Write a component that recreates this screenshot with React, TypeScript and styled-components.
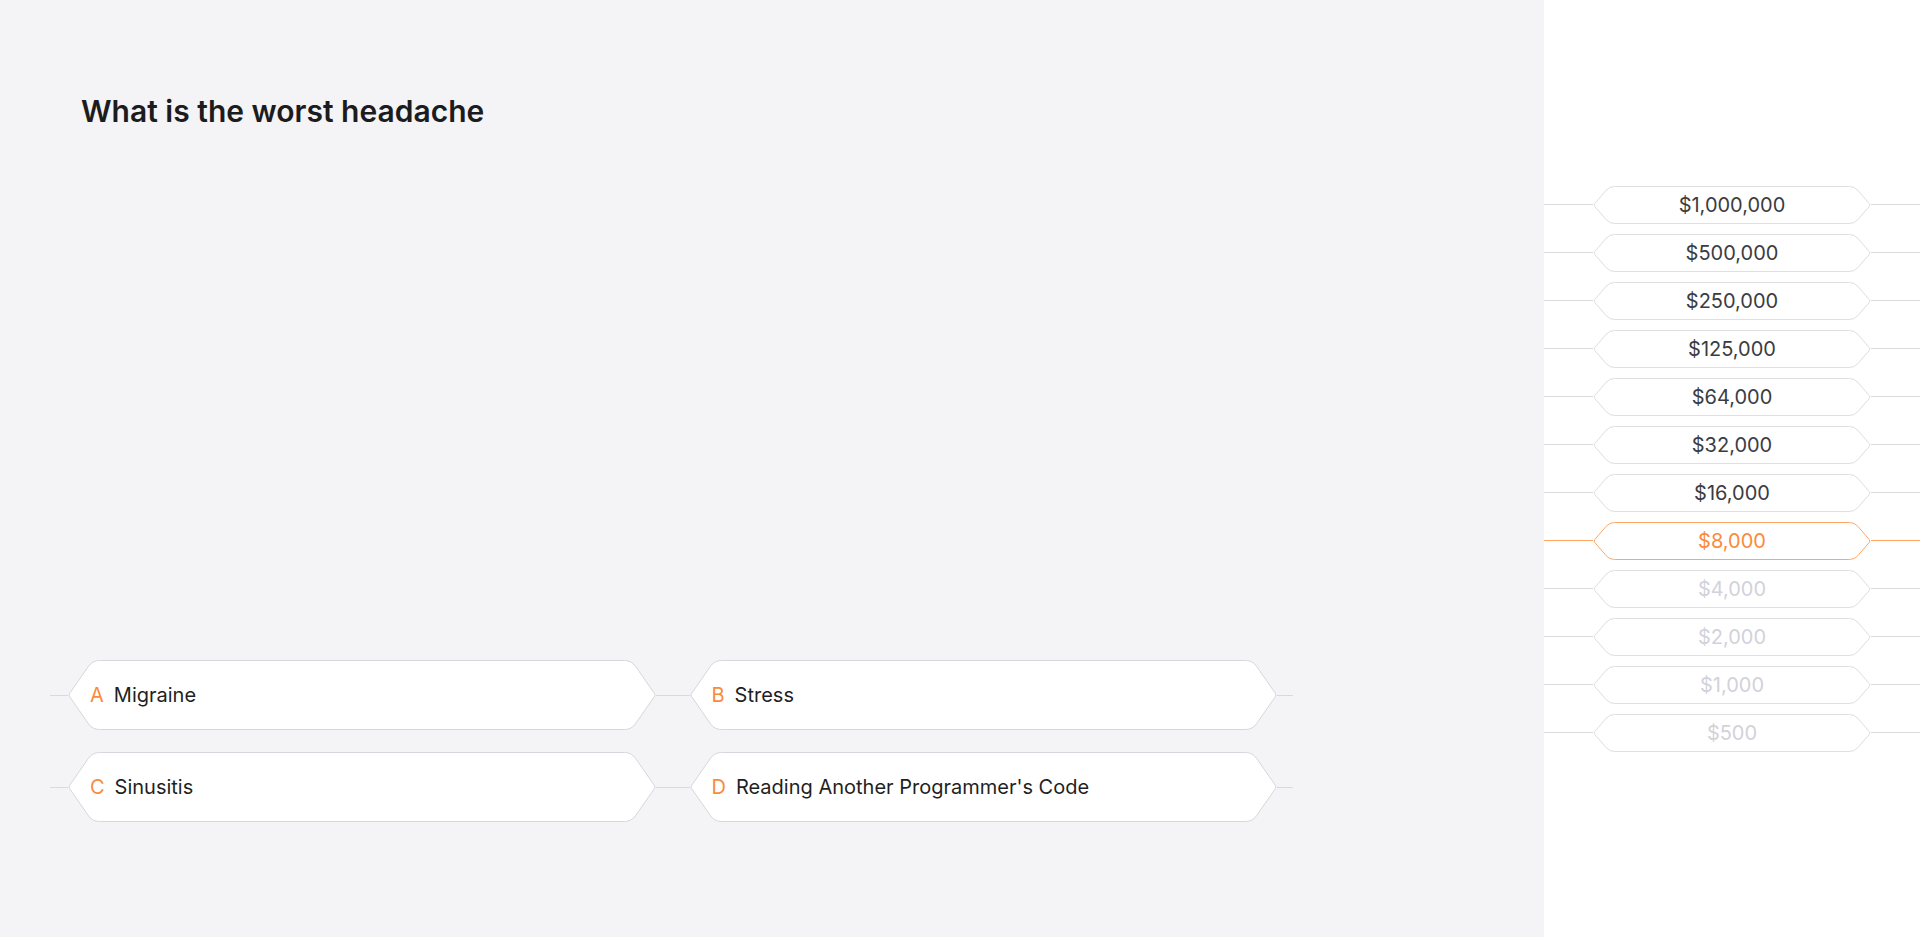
import React from "react";
import styled, { createGlobalStyle } from "styled-components";

const GlobalStyle = createGlobalStyle`
  html, body { margin: 0; padding: 0; }
  body { font-family: Inter, "Noto Sans", Arial, sans-serif; background: #ffffff; }
  * { box-sizing: border-box; }
`;

const ORANGE = "#fa8b3b";
const ORANGE_LINE = "#ffa866";
const GRAY_BORDER = "#d6d6dc";
const GRAY_LINE = "#d9d9de";

function capPath(w: number, h: number, b: number, r: number, rt: number) {
  const y0 = 0.5;
  const y1 = h - 0.5;
  const ym = h / 2;
  const cx = b + 0.5;
  const tx = 0.5;
  const dx = tx - cx;
  const dy = ym - y0;
  const L = Math.sqrt(dx * dx + dy * dy);
  const ux = dx / L;
  const uy = dy / L;
  const f = (n: number) => n.toFixed(2);
  return [
    `M ${f(w)} ${f(y0)}`,
    `L ${f(cx + r)} ${f(y0)}`,
    `Q ${f(cx)} ${f(y0)} ${f(cx + ux * r)} ${f(y0 + uy * r)}`,
    `L ${f(tx - ux * rt)} ${f(ym - uy * rt)}`,
    `Q ${f(tx)} ${f(ym)} ${f(tx - ux * rt)} ${f(ym + uy * rt)}`,
    `L ${f(cx + ux * r)} ${f(y1 - uy * r)}`,
    `Q ${f(cx)} ${f(y1)} ${f(cx + r)} ${f(y1)}`,
    `L ${f(w)} ${f(y1)}`,
  ].join(" ");
}

const CapSvg = styled.svg<{ $flip?: boolean }>`
  display: block;
  flex: none;
  transform: ${(p) => (p.$flip ? "scaleX(-1)" : "none")};
`;

type CapProps = { w: number; h: number; b: number; r: number; stroke: string; flip?: boolean };

const Cap = ({ w, h, b, r, stroke, flip }: CapProps) => (
  <CapSvg $flip={flip} width={w} height={h} viewBox={`0 0 ${w} ${h}`}>
    <path d={capPath(w, h, b, r, 2)} fill="#ffffff" stroke={stroke} strokeWidth={1} />
  </CapSvg>
);

const HexBg = styled.div`
  position: absolute;
  inset: 0;
  display: flex;
  z-index: 0;
`;

const HexMid = styled.div<{ $stroke: string }>`
  flex: 1;
  background: #ffffff;
  border-top: 1px solid ${(p) => p.$stroke};
  border-bottom: 1px solid ${(p) => p.$stroke};
`;

type HexBackProps = { h: number; b: number; r: number; stroke: string };

const HexBack = ({ h, b, r, stroke }: HexBackProps) => {
  const w = b + r + 2;
  return (
    <HexBg>
      <Cap w={w} h={h} b={b} r={r} stroke={stroke} />
      <HexMid $stroke={stroke} />
      <Cap w={w} h={h} b={b} r={r} stroke={stroke} flip />
    </HexBg>
  );
};

const Page = styled.div`
  display: flex;
  width: 100%;
  height: 100vh;
  min-height: 937px;
`;

const QuestionPanel = styled.main`
  flex: 1;
  background: #f4f4f6;
  display: flex;
  flex-direction: column;
  padding: 93px 0 115px 50px;
`;

const Title = styled.h1`
  margin: 0 0 0 31px;
  font-size: 30px;
  line-height: 36px;
  font-weight: 600;
  color: #1c1c1e;
  letter-spacing: 0;
`;

const AnswerGrid = styled.div`
  margin-top: auto;
  width: 1243px;
  display: grid;
  grid-template-columns: 1fr 1fr;
  row-gap: 22px;
`;

const ConnRow = styled.div`
  display: flex;
  align-items: center;
`;

const Connector = styled.div<{ $color: string; $width?: number }>`
  height: 1px;
  background: ${(p) => p.$color};
  ${(p) => (p.$width ? `width: ${p.$width}px; flex: none;` : "flex: 1;")}
`;

const AnswerHex = styled.button`
  position: relative;
  flex: 1;
  height: 70px;
  border: 0;
  background: transparent;
  padding: 0 0 0 22px;
  display: flex;
  align-items: center;
  font-family: inherit;
  cursor: pointer;
  text-align: left;
`;

const AnswerContent = styled.span`
  position: relative;
  z-index: 1;
  display: flex;
  align-items: center;
  gap: 10px;
  font-size: 20px;
  line-height: 24px;
  color: #1f1f22;
`;

const AnswerLetter = styled.span`
  color: ${ORANGE};
`;

const LadderPanel = styled.aside`
  width: 376px;
  flex: none;
  background: #ffffff;
  display: flex;
  flex-direction: column;
  justify-content: center;
  gap: 10px;
`;

type Level = "reached" | "current" | "locked";

const MoneyHex = styled.div<{ $level: Level }>`
  position: relative;
  width: 278px;
  flex: none;
  height: 38px;
  display: flex;
  align-items: center;
  justify-content: center;
  font-size: 20px;
  font-weight: 400;
  color: ${(p) => (p.$level === "current" ? ORANGE : p.$level === "reached" ? "#3c3c40" : "#d2d2da")};
`;

const MoneyText = styled.span`
  position: relative;
  z-index: 1;
`;

const answers = [
  { letter: "A", text: "Migraine" },
  { letter: "B", text: "Stress" },
  { letter: "C", text: "Sinusitis" },
  { letter: "D", text: "Reading Another Programmer's Code" },
];

const prizes = [
  "$1,000,000",
  "$500,000",
  "$250,000",
  "$125,000",
  "$64,000",
  "$32,000",
  "$16,000",
  "$8,000",
  "$4,000",
  "$2,000",
  "$1,000",
  "$500",
];
const currentIndex = 7;

export default function App() {
  return (
    <>
      <GlobalStyle />
      <Page>
        <QuestionPanel>
          <Title>What is the worst headache</Title>
          <AnswerGrid>
            {answers.map((a) => (
              <ConnRow key={a.letter}>
                <Connector $color={GRAY_LINE} $width={18} />
                <AnswerHex>
                  <HexBack h={70} b={24} r={7} stroke={GRAY_BORDER} />
                  <AnswerContent>
                    <AnswerLetter>{a.letter}</AnswerLetter>
                    {a.text}
                  </AnswerContent>
                </AnswerHex>
                <Connector $color={GRAY_LINE} $width={16} />
              </ConnRow>
            ))}
          </AnswerGrid>
        </QuestionPanel>
        <LadderPanel>
          {prizes.map((p, i) => {
            const level: Level = i === currentIndex ? "current" : i < currentIndex ? "reached" : "locked";
            const stroke = level === "current" ? ORANGE_LINE : "#dedee3";
            const line = level === "current" ? ORANGE_LINE : GRAY_LINE;
            return (
              <ConnRow key={p}>
                <Connector $color={line} />
                <MoneyHex $level={level}>
                  <HexBack h={38} b={16} r={5} stroke={stroke} />
                  <MoneyText>{p}</MoneyText>
                </MoneyHex>
                <Connector $color={line} />
              </ConnRow>
            );
          })}
        </LadderPanel>
      </Page>
    </>
  );
}
